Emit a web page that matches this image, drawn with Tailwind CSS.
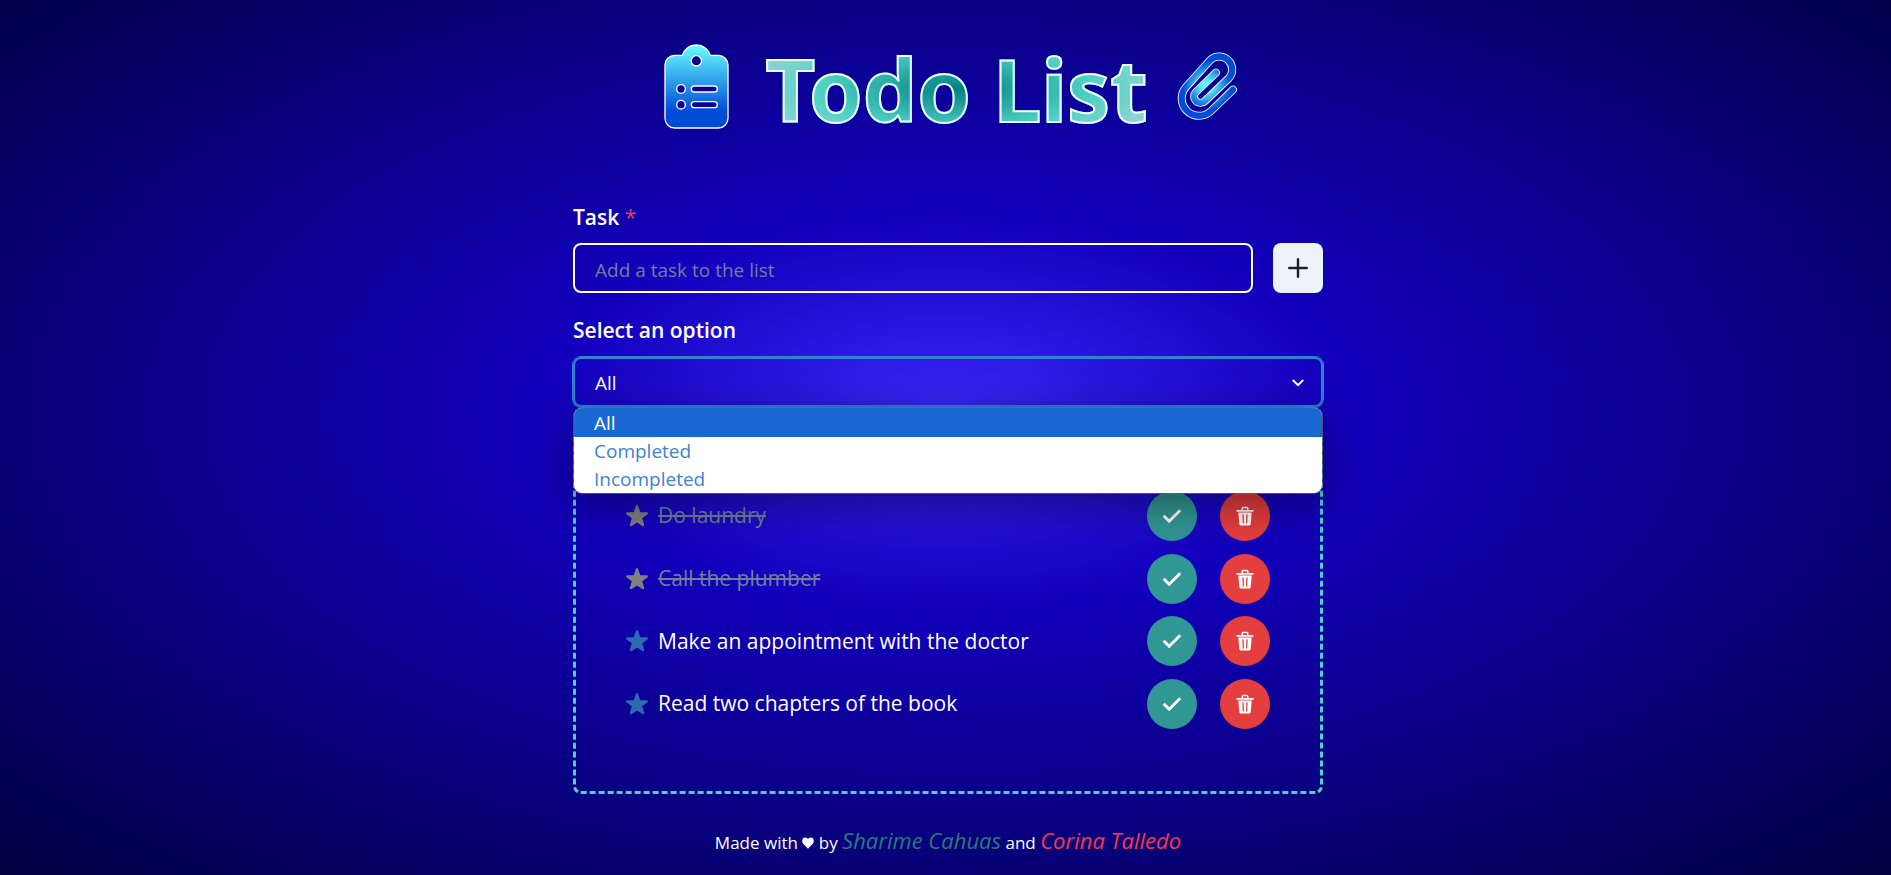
<!DOCTYPE html>
<html lang="en">
<head>
<meta charset="utf-8">
<title>Todo List</title>
<script src="https://cdn.jsdelivr.net/npm/@tailwindcss/browser@4"></script>
</head>
<body class="min-h-screen pl-[5px] font-['Open_Sans','Noto_Sans',sans-serif] text-white bg-[radial-gradient(ellipse_at_50%_47%,#3a27fa_0%,#1200bc_30%,#000040_100%)]">
<svg class="hidden">
  <symbol id="star" viewBox="0 0 22 22"><path d="M11 0q.8 0 1.100.9l2.200 6.300 6.400.1q1 0 1.200.8t-.6 1.300l-5.100 3.800 1.900 6.400q.3 1-.4 1.500t-1.500 0L11 17.400l-5.200 3.700q-.8.5-1.500 0t-.4-1.500l1.900-6.400L.7 9.400Q-.1 8.900.1 8.100t1.200-.8l6.400-.1L9.900.9Q10.200 0 11 0z" fill="currentColor"/></symbol>
  <symbol id="check" viewBox="0 0 20 16"><path d="M1.700 7.700l5.500 5.500L18.200 2.200" fill="none" stroke="currentColor" stroke-width="2.900"/></symbol>
  <symbol id="trash" viewBox="0 0 18 20"><path d="M5.500 4V2.600C5.500 1.500 6.200.8 7.300.8h3.400c1.100 0 1.800.7 1.800 1.800V4h5v1.800H.5V4zM7 4h4V2.300H7z" fill="currentColor" fill-rule="evenodd"/><path d="M2.300 6.600h13.400l-1 11.400c-.1.900-.6 1.500-1.600 1.500H4.900c-1 0-1.500-.6-1.600-1.500zM6.300 8.500l.5 9h1.200l-.3-9zM10.300 8.500l-.3 9h1.200l.5-9z" fill="currentColor" fill-rule="evenodd"/></symbol>
</svg>
<div class="mx-auto flex w-full max-w-[750px] flex-col">
  <header class="flex h-[200px] items-start justify-center pt-[33px] pl-[6px]">
    <svg class="mt-[11px] h-[86px] w-[65px] shrink-0" viewBox="46 40 195 258" aria-hidden="true">
      <defs><linearGradient id="board" x1="0" y1="0" x2="0" y2="1"><stop offset="0" stop-color="#66ffff"/><stop offset=".8" stop-color="#004cd8"/><stop offset="1" stop-color="#0048d8"/></linearGradient></defs>
      <path fill="url(#board)" stroke="#fff" stroke-width="4" fill-rule="evenodd" d="M78 74H101C106 56 122 43 143 43S180 56 185 74H209A29 29 0 0 1 238 103V263A29 29 0 0 1 209 292H78A29 29 0 0 1 49 263V103A29 29 0 0 1 78 74ZM143 75a15 15 0 1 0 0 31a15 15 0 1 0 0-31ZM97 162a13 13 0 1 0 0 26a13 13 0 1 0 0-26ZM97 209a13 13 0 1 0 0 26a13 13 0 1 0 0-26ZM137 166h60a9 9 0 0 1 0 18h-60a9 9 0 0 1 0-18ZM137 213h60a9 9 0 0 1 0 18h-60a9 9 0 0 1 0-18Z"/>
    </svg>
    <h1 class="mr-[29px] ml-[36px] bg-[radial-gradient(ellipse_at_center,#008080,#4fd1c5_50%,#cbd5e0)] bg-clip-text font-['Noto_Sans','Open_Sans',sans-serif] text-[86px] leading-[112px] font-bold whitespace-nowrap text-transparent [-webkit-text-stroke:2px_#e6fffa]">Todo List</h1>
    <svg class="mt-[18px] h-[70px] w-[61px] shrink-0" viewBox="680 62 183 210" fill="none" stroke-linecap="round" stroke-linejoin="round" aria-hidden="true">
      <defs>
        <radialGradient id="clipfill" gradientUnits="userSpaceOnUse" cx="770" cy="167" r="90"><stop offset="0" stop-color="#66ffff"/><stop offset=".2" stop-color="#55eafa"/><stop offset=".8" stop-color="#004cd8"/></radialGradient>
        <path id="clip" d="M848 178L782 242A52 52 0 0 1 708 169L781 88A39 39 0 0 1 836 143L764 212A19 19 0 0 1 737 185L797 127"/>
      </defs>
      <use href="#clip" stroke="#fff" stroke-width="24"/>
      <use href="#clip" stroke="url(#clipfill)" stroke-width="19"/>
    </svg>
  </header>
  <main>
    <form>
      <label for="task" class="block text-[21px] leading-[35px] font-semibold">Task <span class="font-normal text-[#f5385a]">*</span></label>
      <div class="mt-2 flex gap-5">
        <input id="task" type="text" placeholder="Add a task to the list" class="h-[50px] min-w-0 flex-1 rounded-lg border-2 border-white bg-transparent px-5 pt-[3px] text-[19px] placeholder:text-[#718096] outline-none">
        <button type="button" aria-label="Add task" class="flex size-[50px] items-center justify-center rounded-lg bg-[#edf2f7] text-[#1a202c]">
          <svg class="size-5" viewBox="0 0 20 20" fill="none" stroke="currentColor" stroke-width="2.400" stroke-linecap="round"><path d="M10 1.200v17.600M1.200 10h17.600"/></svg>
        </button>
      </div>
      <label for="filter" class="mt-5 block text-[21px] leading-[35px] font-semibold">Select an option</label>
      <div class="relative mt-[9px]">
        <select id="filter" class="block h-[50px] w-full appearance-none rounded-lg border-2 border-[#3182ce] bg-transparent px-5 pt-[3px] text-[19px] ring-1 ring-[#3182ce] outline-none">
          <option>All</option><option>Completed</option><option>Incompleted</option>
        </select>
        <svg class="pointer-events-none absolute top-[22px] right-[19px] h-2 w-3" viewBox="0 0 12 8" fill="none" stroke="#fff" stroke-width="2"><path d="M.8 1l5.200 5.200L11.200 1"/></svg>
        <ul role="listbox" class="absolute inset-x-px top-[51px] z-10 overflow-hidden rounded-lg bg-white pt-px text-[19px] leading-7 text-[#3f82d2] shadow-[0_0_0_1px_#6b6b6bb0,0_10px_48px_#00000070]">
          <li role="option" aria-selected="true" class="-mt-px bg-[#1967d2] px-5 pt-px text-white">All</li>
          <li role="option" aria-selected="false" class="px-5">Completed</li>
          <li role="option" aria-selected="false" class="px-5">Incompleted</li>
        </ul>
      </div>
    </form>
    <section aria-label="Tasks" class="mt-5 rounded-lg border-3 border-dashed border-[#4fd1c5] px-[50px] pt-[61px] pb-[62px]">
      <ul class="flex h-[238px] flex-col justify-between text-[21px]">
        <li class="flex items-center text-[#718096]">
          <svg class="mr-[10px] size-[22px] text-[#808080]"><use href="#star"/></svg><span class="flex-1 line-through">Do laundry</span>
          <button type="button" aria-label="Complete" class="mr-[23px] flex size-[50px] items-center justify-center rounded-full bg-[#319795] text-white"><svg class="h-4 w-5"><use href="#check"/></svg></button>
          <button type="button" aria-label="Delete" class="flex size-[50px] items-center justify-center rounded-full bg-[#e53e3e] text-white"><svg class="h-5 w-[18px]"><use href="#trash"/></svg></button>
        </li>
        <li class="flex items-center text-[#718096]">
          <svg class="mr-[10px] size-[22px] text-[#808080]"><use href="#star"/></svg><span class="flex-1 line-through">Call the plumber</span>
          <button type="button" aria-label="Complete" class="mr-[23px] flex size-[50px] items-center justify-center rounded-full bg-[#319795] text-white"><svg class="h-4 w-5"><use href="#check"/></svg></button>
          <button type="button" aria-label="Delete" class="flex size-[50px] items-center justify-center rounded-full bg-[#e53e3e] text-white"><svg class="h-5 w-[18px]"><use href="#trash"/></svg></button>
        </li>
        <li class="flex items-center">
          <svg class="mr-[10px] size-[22px] text-[#2b6cb0]"><use href="#star"/></svg><span class="flex-1">Make an appointment with the doctor</span>
          <button type="button" aria-label="Complete" class="mr-[23px] flex size-[50px] items-center justify-center rounded-full bg-[#319795] text-white"><svg class="h-4 w-5"><use href="#check"/></svg></button>
          <button type="button" aria-label="Delete" class="flex size-[50px] items-center justify-center rounded-full bg-[#e53e3e] text-white"><svg class="h-5 w-[18px]"><use href="#trash"/></svg></button>
        </li>
        <li class="flex items-center">
          <svg class="mr-[10px] size-[22px] text-[#2b6cb0]"><use href="#star"/></svg><span class="flex-1">Read two chapters of the book</span>
          <button type="button" aria-label="Complete" class="mr-[23px] flex size-[50px] items-center justify-center rounded-full bg-[#319795] text-white"><svg class="h-4 w-5"><use href="#check"/></svg></button>
          <button type="button" aria-label="Delete" class="flex size-[50px] items-center justify-center rounded-full bg-[#e53e3e] text-white"><svg class="h-5 w-[18px]"><use href="#trash"/></svg></button>
        </li>
      </ul>
    </section>
  </main>
  <footer class="mt-[28px] text-center text-[17px] leading-[36px]">Made with <svg class="inline h-3 w-3 align-baseline" viewBox="0 0 12 12" fill="#fff" aria-label="love"><path d="M6 11.800L1 6.400C-.6 4.200.3.6 3.200.5 4.500.4 5.500 1.200 6 2.200 6.500 1.200 7.500.4 8.800.5c2.900.1 3.800 3.700 2.200 5.900z"/></svg> by <a href="#" class="text-[22px] text-[#2c7a7b] italic">Sharime Cahuas</a> and <a href="#" class="text-[22px] text-[#f5384e] italic">Corina Talledo</a></footer>
</div>
</body>
</html>
